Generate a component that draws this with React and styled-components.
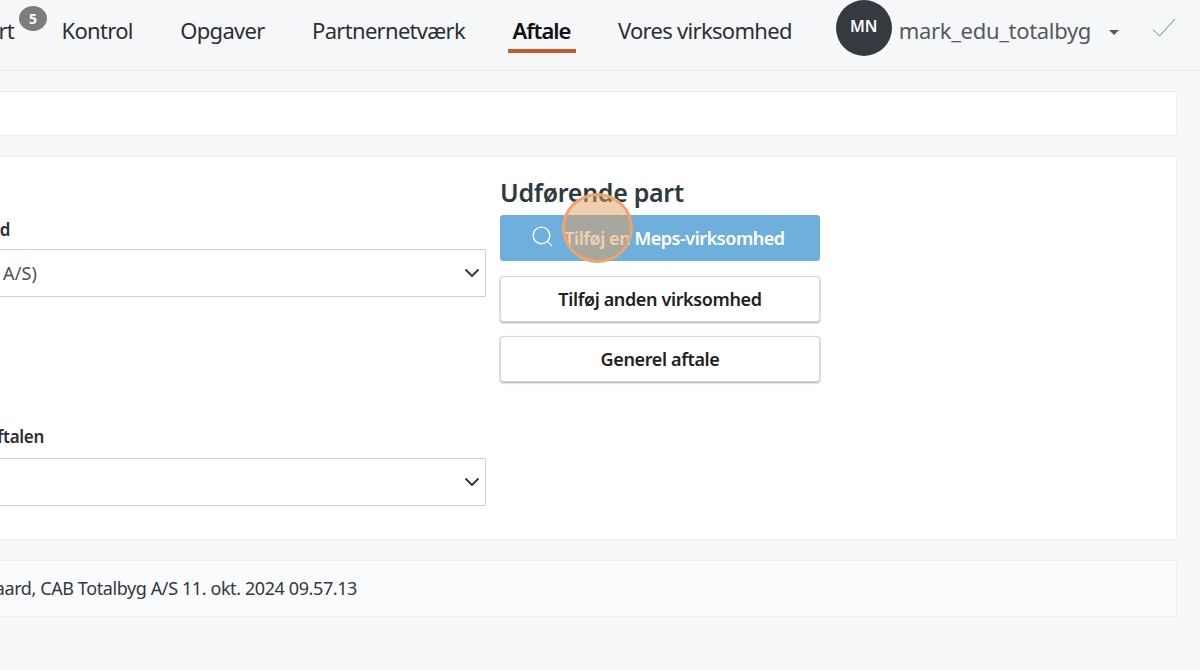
import React from "react";
import styled, { createGlobalStyle } from "styled-components";
import { Search } from "lucide-react";

const GlobalStyle = createGlobalStyle`
  html, body {
    margin: 0;
    height: 100%;
    overflow: hidden;
    background: #f6f7f9;
    font-family: "Noto Sans", "Open Sans", sans-serif;
  }
  * { box-sizing: border-box; }
`;

const Page = styled.div`
  position: relative;
  width: 1200px;
  height: 670px;
  overflow: hidden;
  background: #f6f7f9;
`;

const Navbar = styled.header`
  display: flex;
  justify-content: flex-end;
  align-items: flex-start;
  height: 71px;
  padding-right: 24px;
  border-bottom: 1px solid #e6e8eb;
`;

const NavList = styled.nav`
  display: flex;
  gap: 47.5px;
  margin-right: 44px;
`;

const NavItem = styled.a`
  position: relative;
  display: block;
  flex: none;
  padding-top: 15px;
  font-size: 22px;
  line-height: 31px;
  letter-spacing: ${(p) => (p.$active ? "-1px" : "-0.7px")};
  white-space: nowrap;
  color: ${(p) => (p.$active ? "#111" : "#2b2f33")};
  font-weight: ${(p) => (p.$active ? 600 : 400)};

  ${(p) =>
    p.$active &&
    `&::after {
      content: "";
      position: absolute;
      left: -5px;
      right: -6px;
      top: 49px;
      height: 4px;
      background: #c9582c;
    }`}
`;

const Badge = styled.span`
  position: absolute;
  top: 6px;
  right: -33px;
  display: flex;
  align-items: center;
  justify-content: center;
  width: 28px;
  height: 25px;
  border-radius: 50%;
  background: #7b7d7f;
  color: #fff;
  font-size: 14px;
  font-weight: 700;
  letter-spacing: 0;
`;

const UserMenu = styled.div`
  display: flex;
  align-items: flex-start;
  flex: none;
`;

const Avatar = styled.div`
  display: flex;
  align-items: center;
  justify-content: center;
  width: 56px;
  height: 56px;
  padding-bottom: 4px;
  border-radius: 50%;
  background: #343a40;
  color: #fff;
  font-size: 16px;
  font-weight: 600;
`;

const UserName = styled.span`
  margin: 15px 0 0 7px;
  font-size: 22px;
  line-height: 31px;
  letter-spacing: -0.33px;
  color: #55595c;
`;

const Caret = styled.span`
  width: 0;
  height: 0;
  margin: 30px 0 0 18px;
  border-left: 5.5px solid transparent;
  border-right: 5.5px solid transparent;
  border-top: 5px solid #55595c;
`;

const CheckMark = styled.svg`
  width: 24px;
  height: 20px;
  margin: 18px 0 0 33px;
`;

const Content = styled.main`
  display: flex;
  flex-direction: column;
  gap: 20px;
  margin: 20px 23px 0 -2px;
`;

const Card = styled.section`
  height: ${(p) => p.$h}px;
  background: ${(p) => p.$bg || "#fff"};
  border: 1px solid #eceef0;
  border-radius: 2px;
`;

const FormCard = styled(Card)`
  display: grid;
  grid-template-columns: 487px 320px;
  column-gap: 14px;
  padding-top: 20px;
`;

const LeftColumn = styled.div`
  display: flex;
  flex-direction: column;
`;

const RightColumn = styled.div`
  display: flex;
  flex-direction: column;
  align-items: stretch;
`;

/* the page is cut on its left side, so these texts end at a given x */
const ClippedEnd = styled.div`
  display: flex;
  justify-content: flex-end;
  width: ${(p) => p.$end}px;
  white-space: pre;
`;

const Label = styled(ClippedEnd)`
  margin-top: ${(p) => p.$top}px;
  font-size: 17px;
  line-height: 24px;
  font-weight: 600;
  letter-spacing: -0.3px;
  color: #2b2f33;
`;

const SelectBox = styled.div`
  display: flex;
  align-items: center;
  justify-content: space-between;
  height: 48px;
  margin-top: ${(p) => p.$top || 0}px;
  padding-right: 5px;
  background: #fff;
  border: 1px solid #ced1d4;
  border-radius: 1px;
  font-size: 18px;
  letter-spacing: 0.1px;
  color: #495057;
`;

const SelectChevron = styled.svg`
  flex: none;
  width: 16px;
  height: 16px;
`;

const Heading = styled.h2`
  margin: 0 0 8px;
  font-size: 25px;
  line-height: 30px;
  font-weight: 600;
  letter-spacing: -0.3px;
  color: #2f3a40;
`;

const Button = styled.button`
  display: flex;
  align-items: center;
  justify-content: center;
  gap: 9px;
  height: 46px;
  margin-top: ${(p) => p.$top || 0}px;
  padding: ${(p) => (p.$primary ? "0 5px 0 0" : "0")};
  border-radius: 3px;
  font-family: inherit;
  font-size: 18px;
  font-weight: 600;
  letter-spacing: ${(p) => (p.$primary ? "-0.45px" : "-0.37px")};
  color: ${(p) => (p.$primary ? "#fff" : "#222")};
  background: ${(p) => (p.$primary ? "#6fafdb" : "#fff")};
  border: 1px solid ${(p) => (p.$primary ? "#6fafdb" : "#d3d5d7")};
  box-shadow: ${(p) => (p.$primary ? "none" : "0 1px 2px rgba(0, 0, 0, 0.35)")};
`;

const SearchIcon = styled(Search)`
  margin-bottom: 4px;
`;

const FooterText = styled(ClippedEnd)`
  padding-top: 15px;
  font-size: 18px;
  line-height: 24px;
  letter-spacing: -0.4px;
  color: #33383c;
`;

const ClickMarker = styled.div`
  position: absolute;
  left: 562px;
  top: 193px;
  width: 71px;
  height: 70px;
  border-radius: 50%;
  background: rgba(226, 160, 96, 0.5);
  border: 3px solid #eda56b;
`;

const Chevron = () => (
  <SelectChevron viewBox="0 0 16 16" fill="none">
    <path d="M2 5l6 6 6-6" stroke="#343a40" strokeWidth="2" strokeLinecap="round" strokeLinejoin="round" />
  </SelectChevron>
);

const App = () => (
  <Page>
    <GlobalStyle />
    <Navbar>
      <NavList>
        <NavItem>
          Overblik og rapport
          <Badge>5</Badge>
        </NavItem>
        <NavItem>Kontrol</NavItem>
        <NavItem>Opgaver</NavItem>
        <NavItem>Partnernetværk</NavItem>
        <NavItem $active>Aftale</NavItem>
        <NavItem>Vores virksomhed</NavItem>
      </NavList>
      <UserMenu>
        <Avatar>MN</Avatar>
        <UserName>mark_edu_totalbyg</UserName>
        <Caret />
        <CheckMark viewBox="0 0 24 20" fill="none">
          <path d="M1 11.5l6.5 6.5L23 1" stroke="#4f9a6b" strokeWidth="1" />
        </CheckMark>
      </UserMenu>
    </Navbar>
    <Content>
      <Card $h={45} />
      <FormCard $h={384}>
        <LeftColumn>
          <Label $end={11} $top={41}>
            Bestillende virksomhed
          </Label>
          <SelectBox $top={7}>
            <ClippedEnd $end={37}>CAB Totalbyg  A/S)</ClippedEnd>
            <Chevron />
          </SelectBox>
          <Label $end={45} $top={128}>
            Vælg type af aftalen
          </Label>
          <SelectBox $top={9}>
            <span />
            <Chevron />
          </SelectBox>
        </LeftColumn>
        <RightColumn>
          <Heading>Udførende part</Heading>
          <Button $primary>
            <SearchIcon size={25} strokeWidth={1.3} />
            Tilføj en Meps-virksomhed
          </Button>
          <Button $top={15}>Tilføj anden virksomhed</Button>
          <Button $top={14}>Generel aftale</Button>
        </RightColumn>
      </FormCard>
      <Card $h={57} $bg="#fafbfc">
        <FooterText $end={358}>Oprettet af Mark Nørgaard, CAB Totalbyg A/S 11. okt. 2024 09.57.13</FooterText>
      </Card>
    </Content>
    <ClickMarker />
  </Page>
);

export default App;
